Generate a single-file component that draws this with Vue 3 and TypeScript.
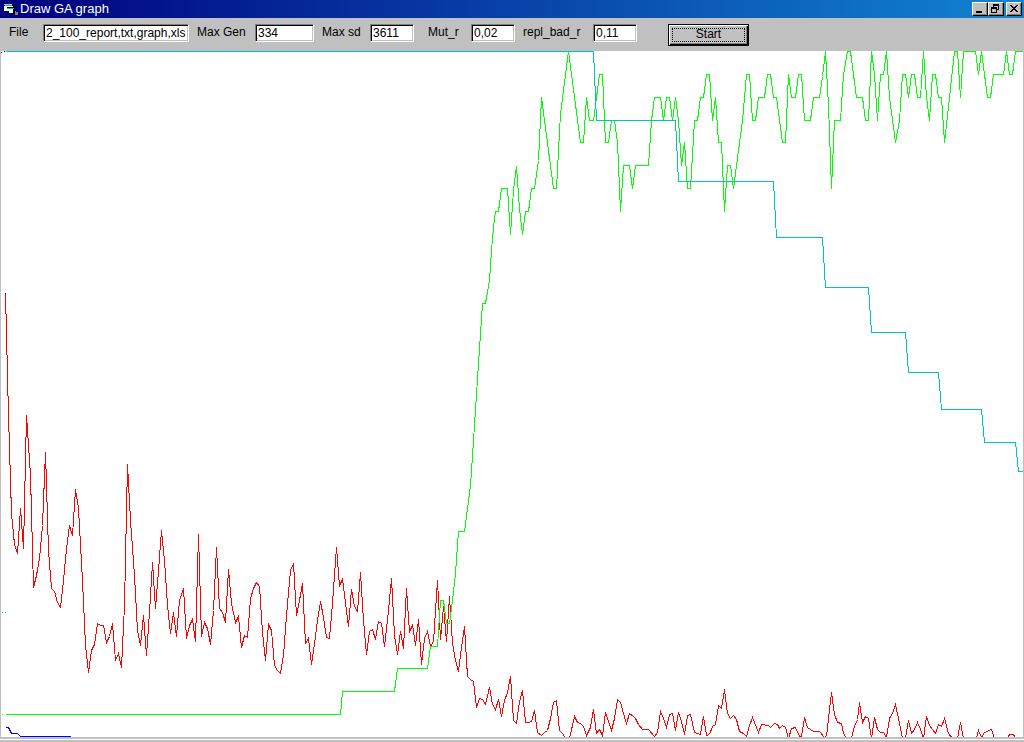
<script setup lang="ts">
import { ref } from 'vue'

const fileName = ref('2_100_report,txt,graph,xls')
const maxGen = ref('334')
const maxSd = ref('3611')
const mutationRate = ref('0,02')
const replaceRate = ref('0,11')

interface Series {
  name: string
  color: string
  data: string
}

// Each series is a list of x,y pairs in plot units.
const series: Series[] = [
  {
    name: 'deviation',
    color: '#ff0000',
    data: `5,293 8,415 11,513 14,544 17,553 20,508 23,548 26,415 30,475 33,587 36,575 39,558 42,525 45,452
      48,550 51,588 54,591 57,602 60,607 63,580 66,548 69,525 72,535 75,489 78,508 82,580 85,645 88,672
      91,650 94,644 97,623 100,625 103,625 106,642 109,636 112,623 115,660 118,653 121,667 124,605 127,464
      130,520 134,575 137,630 140,645 143,615 146,655 149,612 152,562 155,608 158,570 161,530 164,560
      167,605 170,633 173,612 176,636 179,600 183,588 186,638 189,625 192,619 195,641 198,534 201,636
      204,622 207,628 210,644 213,610 216,547 219,608 222,612 225,622 228,569 231,603 235,622 238,616
      241,647 244,635 247,637 250,598 253,588 256,582 259,586 262,632 265,660 268,624 271,630 274,665
      277,670 280,673 283,655 286,615 290,570 293,563 296,615 299,600 302,583 305,643 308,638 311,664
      314,643 317,620 320,601 323,617 326,637 329,638 332,603 336,547 339,586 342,578 345,603 348,626
      351,589 354,606 357,611 360,572 363,620 366,654 369,631 372,629 375,639 378,621 381,623 384,646
      388,610 391,578 394,635 397,654 400,631 403,648 406,588 409,632 412,624 415,645 418,619 421,664
      424,638 427,631 430,646 433,641 437,580 440,639 443,606 446,641 449,596 452,643 455,660 458,671
      461,647 464,626 467,676 470,679 473,681 476,707 479,698 482,699 485,704 489,687 492,704 495,709
      498,699 501,716 504,700 507,692 510,676 513,720 516,723 519,701 522,690 525,722 528,722 531,721
      534,710 537,732 541,735 544,732 547,730 550,718 553,702 556,700 559,730 562,733 565,738 569,738
      574,716 577,722 580,723 583,726 586,735 590,727 593,709 596,733 599,729 602,735 605,712 608,721
      611,730 614,718 617,699 620,702 623,713 626,723 629,713 633,716 635,718 638,724 642,729 648,729
      654,736 657,732 660,711 663,718 666,727 669,714 672,713 675,730 678,712 681,721 684,734 687,715
      690,714 694,732 700,734 703,716 706,735 709,734 712,726 715,724 718,705 721,708 724,689 727,713
      730,718 733,715 736,719 739,731 743,733 746,736 749,725 752,717 758,732 761,724 768,725 770,727
      774,723 777,724 779,728 782,725 785,727 788,738 791,728 795,727 799,736 801,736 804,717 807,727
      813,731 819,731 824,737 826,736 828,718 831,692 834,714 837,722 841,723 843,733 846,738 851,738
      854,726 857,719 859,702 862,722 865,716 868,718 871,738 874,717 877,729 880,732 883,732 886,737
      889,718 892,713 895,704 898,718 902,738 905,738 908,720 911,733 914,729 917,722 920,729 923,738
      926,716 929,725 935,733 938,724 941,726 944,718 948,733 952,738 957,738 960,722 963,738 976,738
      978,730 981,737 984,732 991,729 994,738 1007,738 1009,734 1013,734 1015,738`,
  },
  {
    name: 'fitness',
    color: '#00ff00',
    data: `5,714 340,714 342,691 394,691 397,668 427,668 430,646 437,646 440,600 443,600 446,623 449,623
      452,600 455,573 458,531 464,531 467,508 470,485 473,440 476,394 479,348 482,303 485,303 489,280
      491,250 493,227 495,211 498,211 501,188 507,188 510,234 513,190 516,166 519,208 522,234 525,211
      528,211 531,188 534,188 538,160 541,97 553,188 556,188 560,113 568,51 580,142 583,142 586,97 589,120
      593,120 596,97 599,74 602,74 605,142 608,142 611,120 614,120 617,142 620,211 623,165 629,165 632,188
      635,165 648,165 651,120 654,97 660,97 663,120 666,97 669,97 672,120 675,97 678,120 681,165 684,142
      687,188 690,188 694,120 697,120 700,97 703,97 706,74 709,74 712,120 715,97 718,142 721,142 724,211
      727,165 730,165 733,188 736,165 742,120 746,74 749,74 752,120 755,120 758,97 764,97 767,74 770,74
      773,97 776,97 782,142 785,142 788,74 791,97 795,97 798,74 801,74 804,120 810,120 813,97 819,97
      822,76 825,51 828,105 831,188 834,120 840,120 843,74 847,51 850,51 856,97 862,97 865,120 868,120
      871,51 874,74 877,120 880,74 883,74 886,51 889,97 895,142 899,120 902,74 905,74 908,97 911,74 914,74
      917,97 920,97 923,51 926,97 929,120 932,74 935,74 938,97 941,97 944,142 947,115 954,51 957,51 960,97
      963,51 975,51 978,74 981,51 987,97 990,97 993,74 1003,74 1006,51 1009,74 1012,74 1015,51 1023,51`,
  },
  {
    name: 'threshold',
    color: '#00c4c4',
    data: `5,51 593,51 596,120 675,120 678,181 773,181 776,237 822,237 825,287 868,287 871,332 905,332
      908,372 938,372 941,409 981,409 984,442 1015,442 1018,471 1023,471`,
  },
  {
    name: 'best',
    color: '#0000ff',
    data: '5,727 8,727 11,733 17,733 20,736 70,736',
  },
]

// Isolated samples: x, y, colour.
const dots: [number, number, string][] = [
  [2, 51, '#ffff00'],
  [1, 52, '#0000ff'],
  [4, 51, '#0000ff'],
  [5, 293, '#0000ff'],
  [2, 612, '#00c4c4'],
  [5, 612, '#00c4c4'],
  [2, 714, '#00ff00'],
]

// Centres every vertex on its pixel so one-pixel strokes stay crisp.
const toPoints = (data: string): string =>
  data
    .trim()
    .split(/\s+/)
    .map((pair) => pair.split(',').map((n) => Number(n) + 0.5).join(','))
    .join(' ')
</script>

<template>
  <div class="window">
    <header class="titlebar">
      <svg class="app-icon" width="14" height="13" viewBox="0 0 14 13" shape-rendering="crispEdges" aria-hidden="true">
        <path d="M0 1h9v1h1v2h1v7H5v-1H4V8H0z" fill="#000" />
        <path d="M0 1h8v1H0z" fill="#c0c0c0" />
        <path d="M1 2h7v1H1z" fill="#00c4c4" />
        <path d="M0 3h3v5H0zM3 3h6v1H3z" fill="#fff" />
        <path d="M3 5h7v1H3z" fill="#00c4c4" />
        <path d="M3 6h6v4H5V8H3z" fill="#fff" />
        <path d="M11 8h1v1h2v3h-3z" fill="#808080" />
      </svg>
      <h1 class="title">Draw GA graph</h1>
      <div class="controls">
        <button type="button" class="control" aria-label="Minimize">
          <svg width="12" height="10" viewBox="0 0 12 10" shape-rendering="crispEdges"><path d="M2 7h6v2H2z" /></svg>
        </button>
        <button type="button" class="control" aria-label="Restore">
          <svg width="12" height="10" viewBox="0 0 12 10" shape-rendering="crispEdges">
            <path fill-rule="evenodd" d="M3 0h6v6H7V5h1V2H4v1H3zM1 3h6v6H1zM2 5v3h4V5z" />
          </svg>
        </button>
        <button type="button" class="control close" aria-label="Close">
          <svg width="12" height="10" viewBox="0 0 12 10" shape-rendering="crispEdges">
            <path d="M2 1h2v1h1v1h2V2h1V1h2v1H9v1H8v1H7v1h1v1h1v1h1v1H8V7H7V6H5v1H4v1H2V7h1V6h1V5h1V4H4V3H3V2H2z" />
          </svg>
        </button>
      </div>
    </header>

    <form class="toolbar" @submit.prevent>
      <label for="file">File</label>
      <input id="file" v-model="fileName" type="text" />
      <label for="max-gen">Max Gen</label>
      <input id="max-gen" v-model="maxGen" type="text" />
      <label for="max-sd">Max sd</label>
      <input id="max-sd" v-model="maxSd" type="text" />
      <label for="mut" class="wide">Mut_r</label>
      <input id="mut" v-model="mutationRate" type="text" />
      <label for="repl">repl_bad_r</label>
      <input id="repl" v-model="replaceRate" type="text" />
      <button type="submit" class="start"><span>Start</span></button>
    </form>

    <main class="plot">
      <svg viewBox="1 51 1022 686" preserveAspectRatio="none" shape-rendering="crispEdges" role="img" aria-label="GA graph">
        <polyline
          v-for="s in series"
          :key="s.name"
          :points="toPoints(s.data)"
          :stroke="s.color"
          fill="none"
          vector-effect="non-scaling-stroke"
        />
        <rect v-for="(d, i) in dots" :key="i" :x="d[0]" :y="d[1]" width="1" height="1" :fill="d[2]" />
      </svg>
    </main>
    <footer class="edge"></footer>
  </div>
</template>

<style>
html,
body {
  margin: 0;
  overflow: hidden;
}
</style>

<style scoped>
.window {
  display: flex;
  flex-direction: column;
  height: 100vh;
  background: #c0c0c0;
  color: #000;
  font-family: 'Liberation Sans', Arial, sans-serif;
  font-size: 12px;
}

.titlebar {
  display: flex;
  align-items: center;
  flex: none;
  height: 18px;
  padding: 0 2px 0 4px;
  background: linear-gradient(90deg, #000080, #1084d0);
}

.app-icon {
  flex: none;
}

.title {
  flex: 1;
  margin: 0 0 0 2px;
  color: #fff;
  font-size: 13px;
  font-weight: 400;
  line-height: 16px;
}

.controls {
  display: flex;
}

.control {
  display: block;
  box-sizing: border-box;
  width: 16px;
  height: 14px;
  padding: 1px;
  border: 1px solid;
  border-color: #fff #000 #000 #fff;
  background: #c0c0c0;
  box-shadow: inset -1px -1px #808080;
}

.control svg {
  display: block;
}

.close {
  margin-left: 2px;
}

.toolbar {
  display: grid;
  grid-template-columns: 34px 146px 66px 59px 56px 44px 57px 44px 78px 44px 112px;
  align-items: start;
  flex: none;
  height: 26px;
  padding: 6px 0 0 9px;
}

.toolbar label {
  padding-left: 8px;
  line-height: 16px;
  white-space: nowrap;
}

.toolbar label:first-child {
  padding-left: 0;
}

.toolbar label.wide {
  padding-left: 14px;
}

.toolbar input {
  box-sizing: border-box;
  width: 100%;
  min-width: 0;
  height: 18px;
  margin: 0;
  padding: 0;
  border: 1px solid;
  border-color: #808080 #fff #fff #808080;
  border-radius: 0;
  outline: none;
  background: #fff;
  box-shadow: inset 1px 1px #000, inset -1px -1px #c0c0c0;
  font: 12px/16px 'Liberation Sans', Arial, sans-serif;
  text-indent: 2px;
}

.start {
  box-sizing: border-box;
  width: 81px;
  height: 22px;
  margin-left: 31px;
  padding: 3px;
  border: 1px solid #000;
  background: #c0c0c0;
  box-shadow: inset 1px 1px #fff, inset -1px -1px #000, inset -2px -2px #808080;
  font: 12px/14px 'Liberation Sans', Arial, sans-serif;
}

.start span {
  display: block;
  box-sizing: border-box;
  height: 14px;
  border: 1px dotted #000;
  line-height: 10px;
}

.plot {
  flex: 1;
  min-height: 0;
  border: 1px solid #c0c0c0;
  border-bottom-width: 2px;
  background: #fff;
}

.plot svg {
  display: block;
  width: 100%;
  height: 100%;
}

.edge {
  flex: none;
  height: 2px;
  border-top: 1px solid #fff;
}
</style>
